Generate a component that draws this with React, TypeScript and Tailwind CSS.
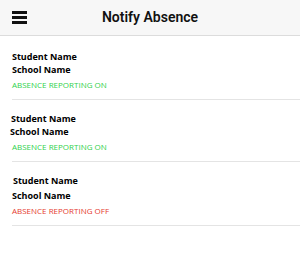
import React from "react";

const students = [
    { student: "Student Name", school: "School Name", on: true, sx: "ml-0", cx: "ml-0", gap: "mt-0" },
    { student: "Student Name", school: "School Name", on: true, sx: "-ml-[1px]", cx: "-ml-[2px]", gap: "mt-0" },
    { student: "Student Name", school: "School Name", on: false, sx: "ml-[1px]", cx: "ml-0", gap: "mt-[2px]" },
];

const App = () => {
    return (
        <div className="w-[300px] h-[256px] bg-white overflow-hidden font-['Open_Sans',sans-serif]">
            <div className="h-[36px] bg-[#f7f7f7] border-b border-[#dcdcdc] flex items-center relative">
                <button className="ml-[12px] flex flex-col gap-[2px] w-[15px]">
                    <span className="h-[3px] w-full bg-[#111]" />
                    <span className="h-[3px] w-full bg-[#111]" />
                    <span className="h-[3px] w-full bg-[#111]" />
                </button>
                <h1 className="absolute left-0 right-0 text-center text-[14px] font-semibold text-[#111] font-['Roboto',sans-serif]">
                    Notify Absence
                </h1>
            </div>
            <div className="pt-[12px]">
                {students.map((s, i) => (
                    <div key={i} className="ml-[12px] border-b border-[#e4e4e4] pt-[2px] pb-[8px] mb-[10px]">
                        <p className={`text-[9px] font-bold text-black leading-[13px] ${s.sx}`}>{s.student}</p>
                        <p className={`text-[9px] font-bold text-black leading-[13px] ${s.cx} ${s.gap}`}>
                            {s.school}
                        </p>
                        <p
                            className={`mt-[3px] text-[8px] leading-[12px] ${
                                s.on ? "text-[#2fd14c]" : "text-[#e53b30]"
                            }`}
                        >
                            {s.on ? "ABSENCE REPORTING ON" : "ABSENCE REPORTING OFF"}
                        </p>
                    </div>
                ))}
            </div>
        </div>
    );
};

export default App;
